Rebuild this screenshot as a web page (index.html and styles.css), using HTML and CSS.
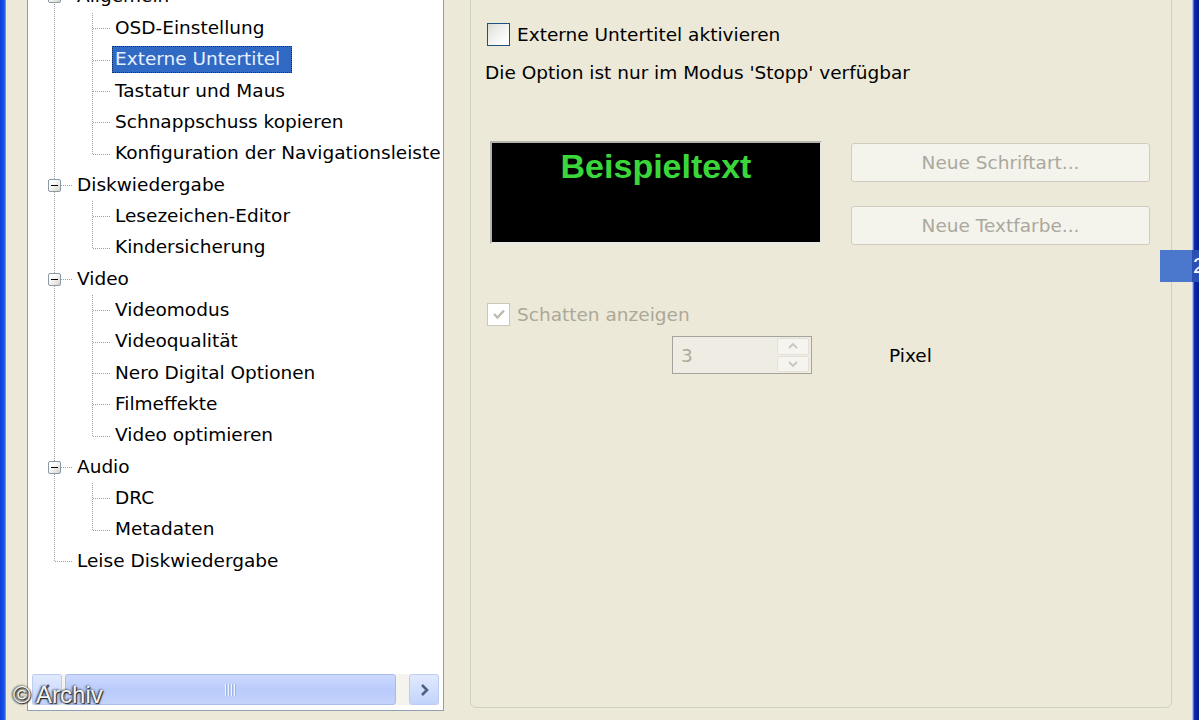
FILE: index.html
```html
<!DOCTYPE html>
<html lang="de">
<head>
  <meta charset="UTF-8">
  <title>Optionen - Externe Untertitel</title>
  <link rel="stylesheet" href="styles.css">
</head>
<body>

  <div class="window">
    <div class="frame frame-left"></div>

    <aside class="sidebar">
      <div class="tree-box">
        <div class="tree-view">
          <ul class="tree">
            <li>
              <div class="row"><span class="expander"></span><span class="label">Allgemein</span></div>
              <ul class="children">
                <li><div class="row"><span class="label">OSD-Einstellung</span></div></li>
                <li><div class="row"><span class="label selected">Externe Untertitel</span></div></li>
                <li><div class="row"><span class="label">Tastatur und Maus</span></div></li>
                <li><div class="row"><span class="label">Schnappschuss kopieren</span></div></li>
                <li><div class="row"><span class="label">Konfiguration der Navigationsleiste</span></div></li>
              </ul>
            </li>
            <li>
              <div class="row"><span class="expander"></span><span class="label">Diskwiedergabe</span></div>
              <ul class="children">
                <li><div class="row"><span class="label">Lesezeichen-Editor</span></div></li>
                <li><div class="row"><span class="label">Kindersicherung</span></div></li>
              </ul>
            </li>
            <li>
              <div class="row"><span class="expander"></span><span class="label">Video</span></div>
              <ul class="children">
                <li><div class="row"><span class="label">Videomodus</span></div></li>
                <li><div class="row"><span class="label">Videoqualität</span></div></li>
                <li><div class="row"><span class="label">Nero Digital Optionen</span></div></li>
                <li><div class="row"><span class="label">Filmeffekte</span></div></li>
                <li><div class="row"><span class="label">Video optimieren</span></div></li>
              </ul>
            </li>
            <li>
              <div class="row"><span class="expander"></span><span class="label">Audio</span></div>
              <ul class="children">
                <li><div class="row"><span class="label">DRC</span></div></li>
                <li><div class="row"><span class="label">Metadaten</span></div></li>
              </ul>
            </li>
            <li class="leaf">
              <div class="row"><span class="label">Leise Diskwiedergabe</span></div>
            </li>
          </ul>
        </div>

        <div class="hscroll">
          <div class="sb-btn">
            <svg width="14" height="14" viewBox="0 0 14 14"><path d="M9 2 L4 7 L9 12" fill="none" stroke="#4d6185" stroke-width="2.6"/></svg>
          </div>
          <div class="sb-thumb"><span class="grip"></span></div>
          <div class="sb-btn">
            <svg width="14" height="14" viewBox="0 0 14 14"><path d="M5 2 L10 7 L5 12" fill="none" stroke="#4d6185" stroke-width="2.6"/></svg>
          </div>
        </div>
      </div>
    </aside>

    <main class="content">
      <fieldset class="group">
        <legend>Externe Untertitel</legend>

        <label class="check-row">
          <span class="checkbox"></span>
          <span>Externe Untertitel aktivieren</span>
        </label>

        <p class="hint">Die Option ist nur im Modus 'Stopp' verfügbar</p>

        <div class="preview-row">
          <div class="preview">Beispieltext</div>
          <div class="btn-col">
            <button class="btn" disabled>Neue Schriftart...</button>
            <button class="btn" disabled>Neue Textfarbe...</button>
          </div>
        </div>

        <label class="check-row shadow-row disabled">
          <span class="checkbox checked">
            <svg width="16" height="16" viewBox="0 0 16 16"><path d="M3 8 L6.5 11.5 L13 4.5" fill="none" stroke="#bdbbae" stroke-width="2.4"/></svg>
          </span>
          <span>Schatten anzeigen</span>
        </label>

        <div class="spin-row">
          <div class="spinner">
            <span class="spin-value">3</span>
            <span class="spin-btns">
              <span class="spin-up"><svg width="12" height="8" viewBox="0 0 12 8"><path d="M2 6 L6 2 L10 6" fill="none" stroke="#c9c7bd" stroke-width="1.8"/></svg></span>
              <span class="spin-down"><svg width="12" height="8" viewBox="0 0 12 8"><path d="M2 2 L6 6 L10 2" fill="none" stroke="#c9c7bd" stroke-width="1.8"/></svg></span>
            </span>
          </div>
          <span class="unit">Pixel</span>
        </div>
      </fieldset>
    </main>

    <div class="frame frame-right"></div>
  </div>

  <div class="page-tab">2</div>
  <div class="watermark">© Archiv</div>

</body>
</html>
```

FILE: styles.css
```css
body {
  margin: 0;
  background: #ece9d8;
  font-family: "DejaVu Sans", "Liberation Sans", sans-serif;
  font-size: 18.5px;
  color: #000;
  overflow: hidden;
}

.window {
  display: flex;
  width: 1199px;
  height: 720px;
  position: relative;
}

.frame {
  width: 7px;
  flex: none;
}

.frame-left {
  width: 6px;
  background: linear-gradient(to right, #0c3fd8, #1a52e6 70%, #8aa8ee);
}

.frame-right {
  background: linear-gradient(to right, #a9c0f0 0, #a9c0f0 1px, #0d2aa8 2px, #001b8c);
}

/* tree */

.sidebar {
  width: 417px;
  padding-left: 21px;
  flex: none;
}

.tree-box {
  height: 711px;
  box-sizing: border-box;
  background: #fff;
  border: 1px solid #8f9fb4;
  border-top: none;
  display: flex;
  flex-direction: column;
}

.tree-view {
  flex: 1;
  overflow: hidden;
}

.tree {
  list-style: none;
  margin: -18.7px 0 0 0;
  padding: 0;
  position: relative;
}

.tree ul {
  list-style: none;
  margin: 0;
  padding: 0;
}

.tree::before {
  content: '';
  position: absolute;
  left: 26px;
  top: 0;
  bottom: 15.7px;
  border-left: 1px dotted #a0a0a0;
}

.children {
  position: relative;
}

.children::before {
  content: '';
  position: absolute;
  left: 64px;
  top: 0;
  bottom: 15.7px;
  border-left: 1px dotted #a0a0a0;
}

.row {
  height: 31.35px;
  display: flex;
  align-items: center;
  position: relative;
  white-space: nowrap;
}

.row::before {
  content: '';
  position: absolute;
  left: 27px;
  width: 17px;
  top: 50%;
  border-top: 1px dotted #a0a0a0;
}

.children .row {
  padding-left: 84px;
}

.children .row::before {
  left: 65px;
  width: 17px;
}

.leaf .row {
  padding-left: 46px;
}

.expander {
  width: 11px;
  height: 11px;
  margin: 0 13px 0 20px;
  border: 1px solid #8a9aa6;
  border-radius: 2px;
  background: linear-gradient(to bottom right, #fff 30%, #d6d3c6);
  position: relative;
  z-index: 1;
}

.expander::after {
  content: '';
  position: absolute;
  left: 2px;
  right: 2px;
  top: 5px;
  border-top: 1px solid #000;
}

.label {
  padding: 2px 3px 3px;
  line-height: 22px;
  position: relative;
}

.label.selected {
  background: #316ac5;
  color: #e8efff;
  padding-right: 12px;
  outline: 1px dotted #1c2b4a;
  outline-offset: -1px;
}

/* horizontal scrollbar */

.hscroll {
  height: 31px;
  display: flex;
  margin: 0 4px 5px 4px;
  gap: 3px;
  background: #f4f3ee;
}

.sb-btn {
  width: 28px;
  flex: none;
  border: 1px solid #bcccf2;
  border-radius: 3px;
  background: linear-gradient(to bottom, #e1eafe, #c2d3fb);
  display: flex;
  align-items: center;
  justify-content: center;
}

.sb-thumb {
  flex: 1;
  margin-right: 10px;
  border: 1px solid #a9bbe9;
  border-radius: 3px;
  background: linear-gradient(to bottom, #cddaff, #b9cbfb 50%, #c4d3fb);
  display: flex;
  align-items: center;
  justify-content: center;
}

.grip {
  width: 11px;
  height: 12px;
  background: repeating-linear-gradient(to right, #eef3ff 0, #eef3ff 1px, #9eb3e6 1px, #9eb3e6 2px, transparent 2px, transparent 3px);
}

/* right panel */

.content {
  flex: 1;
  padding: 0 20px 0 26px;
}

.group {
  margin: -22px 0 0 0;
  height: 730px;
  box-sizing: border-box;
  border: 1px solid #d0d0bf;
  border-radius: 6px;
  padding: 0 0 0 15px;
  min-width: 0;
}

.group legend {
  color: #0046d5;
  line-height: 24px;
  padding: 0 4px;
  margin-left: 2px;
}

.check-row {
  display: flex;
  align-items: center;
  gap: 7px;
  height: 24px;
  margin-top: 20px;
  margin-left: 1px;
  white-space: nowrap;
}

.checkbox {
  width: 21px;
  height: 21px;
  flex: none;
  border: 1px solid #1c5180;
  background: linear-gradient(to bottom right, #dcdcd6, #fff 80%);
  display: flex;
  align-items: center;
  justify-content: center;
}

.hint {
  margin: 15px 0 0 -1px;
  line-height: 24px;
  white-space: nowrap;
}

.preview-row {
  display: flex;
  margin-top: 56px;
}

.preview {
  width: 328px;
  height: 99px;
  margin-left: 4px;
  background: #000;
  border: 2px solid #e8e8e4;
  border-top-color: #b4b4ac;
  border-left-color: #b4b4ac;
  color: #3ad63a;
  font-family: "Liberation Sans", Arial, sans-serif;
  font-weight: bold;
  font-size: 34px;
  text-align: center;
  line-height: 46px;
}

.btn-col {
  display: flex;
  flex-direction: column;
  gap: 24px;
  margin-left: 29px;
  padding-top: 2px;
}

.btn {
  width: 299px;
  height: 39px;
  font-family: inherit;
  font-size: 18.5px;
  color: #aaa89d;
  background: #f5f4ec;
  border: 1px solid #cfcdc1;
  border-radius: 3px;
  padding: 0;
}

.shadow-row {
  margin-top: 57px;
}

.disabled {
  color: #aca899;
}

.disabled .checkbox {
  border-color: #cac8bb;
  background: #fff;
}

.spin-row {
  display: flex;
  align-items: center;
  margin-top: 10px;
}

.spinner {
  width: 140px;
  height: 38px;
  box-sizing: border-box;
  margin-left: 186px;
  border: 1px solid #a4a39c;
  background: #efede3;
  display: flex;
  align-items: center;
}

.spin-value {
  flex: 1;
  padding-left: 8px;
  color: #aca899;
}

.spin-btns {
  width: 32px;
  height: 34px;
  margin-right: 2px;
  display: flex;
  flex-direction: column;
  gap: 1px;
}

.spin-btns span {
  flex: 1;
  background: #f5f4ee;
  border: 1px solid #e4e2d8;
  border-radius: 2px;
  display: flex;
  align-items: center;
  justify-content: center;
}

.unit {
  margin-left: 77px;
}

/* overlays */

.page-tab {
  position: absolute;
  left: 1160px;
  top: 250px;
  width: 39px;
  height: 32px;
  background: linear-gradient(to right, #4b77cc 0, #4b77cc 32px, #2c4fb4 32px);
  color: #fff;
  font-family: "Liberation Sans", Arial, sans-serif;
  font-size: 22px;
  line-height: 32px;
  padding-left: 33px;
  box-sizing: border-box;
  overflow: hidden;
}

.watermark {
  position: absolute;
  left: 13px;
  top: 681px;
  font-family: "Liberation Sans", Arial, sans-serif;
  font-size: 24px;
  color: #f2f2f2;
  text-shadow: 1px 1px 1px #222, -1px 0 2px rgba(0,0,0,0.7), 0 0 3px rgba(0,0,0,0.6);
}
```
